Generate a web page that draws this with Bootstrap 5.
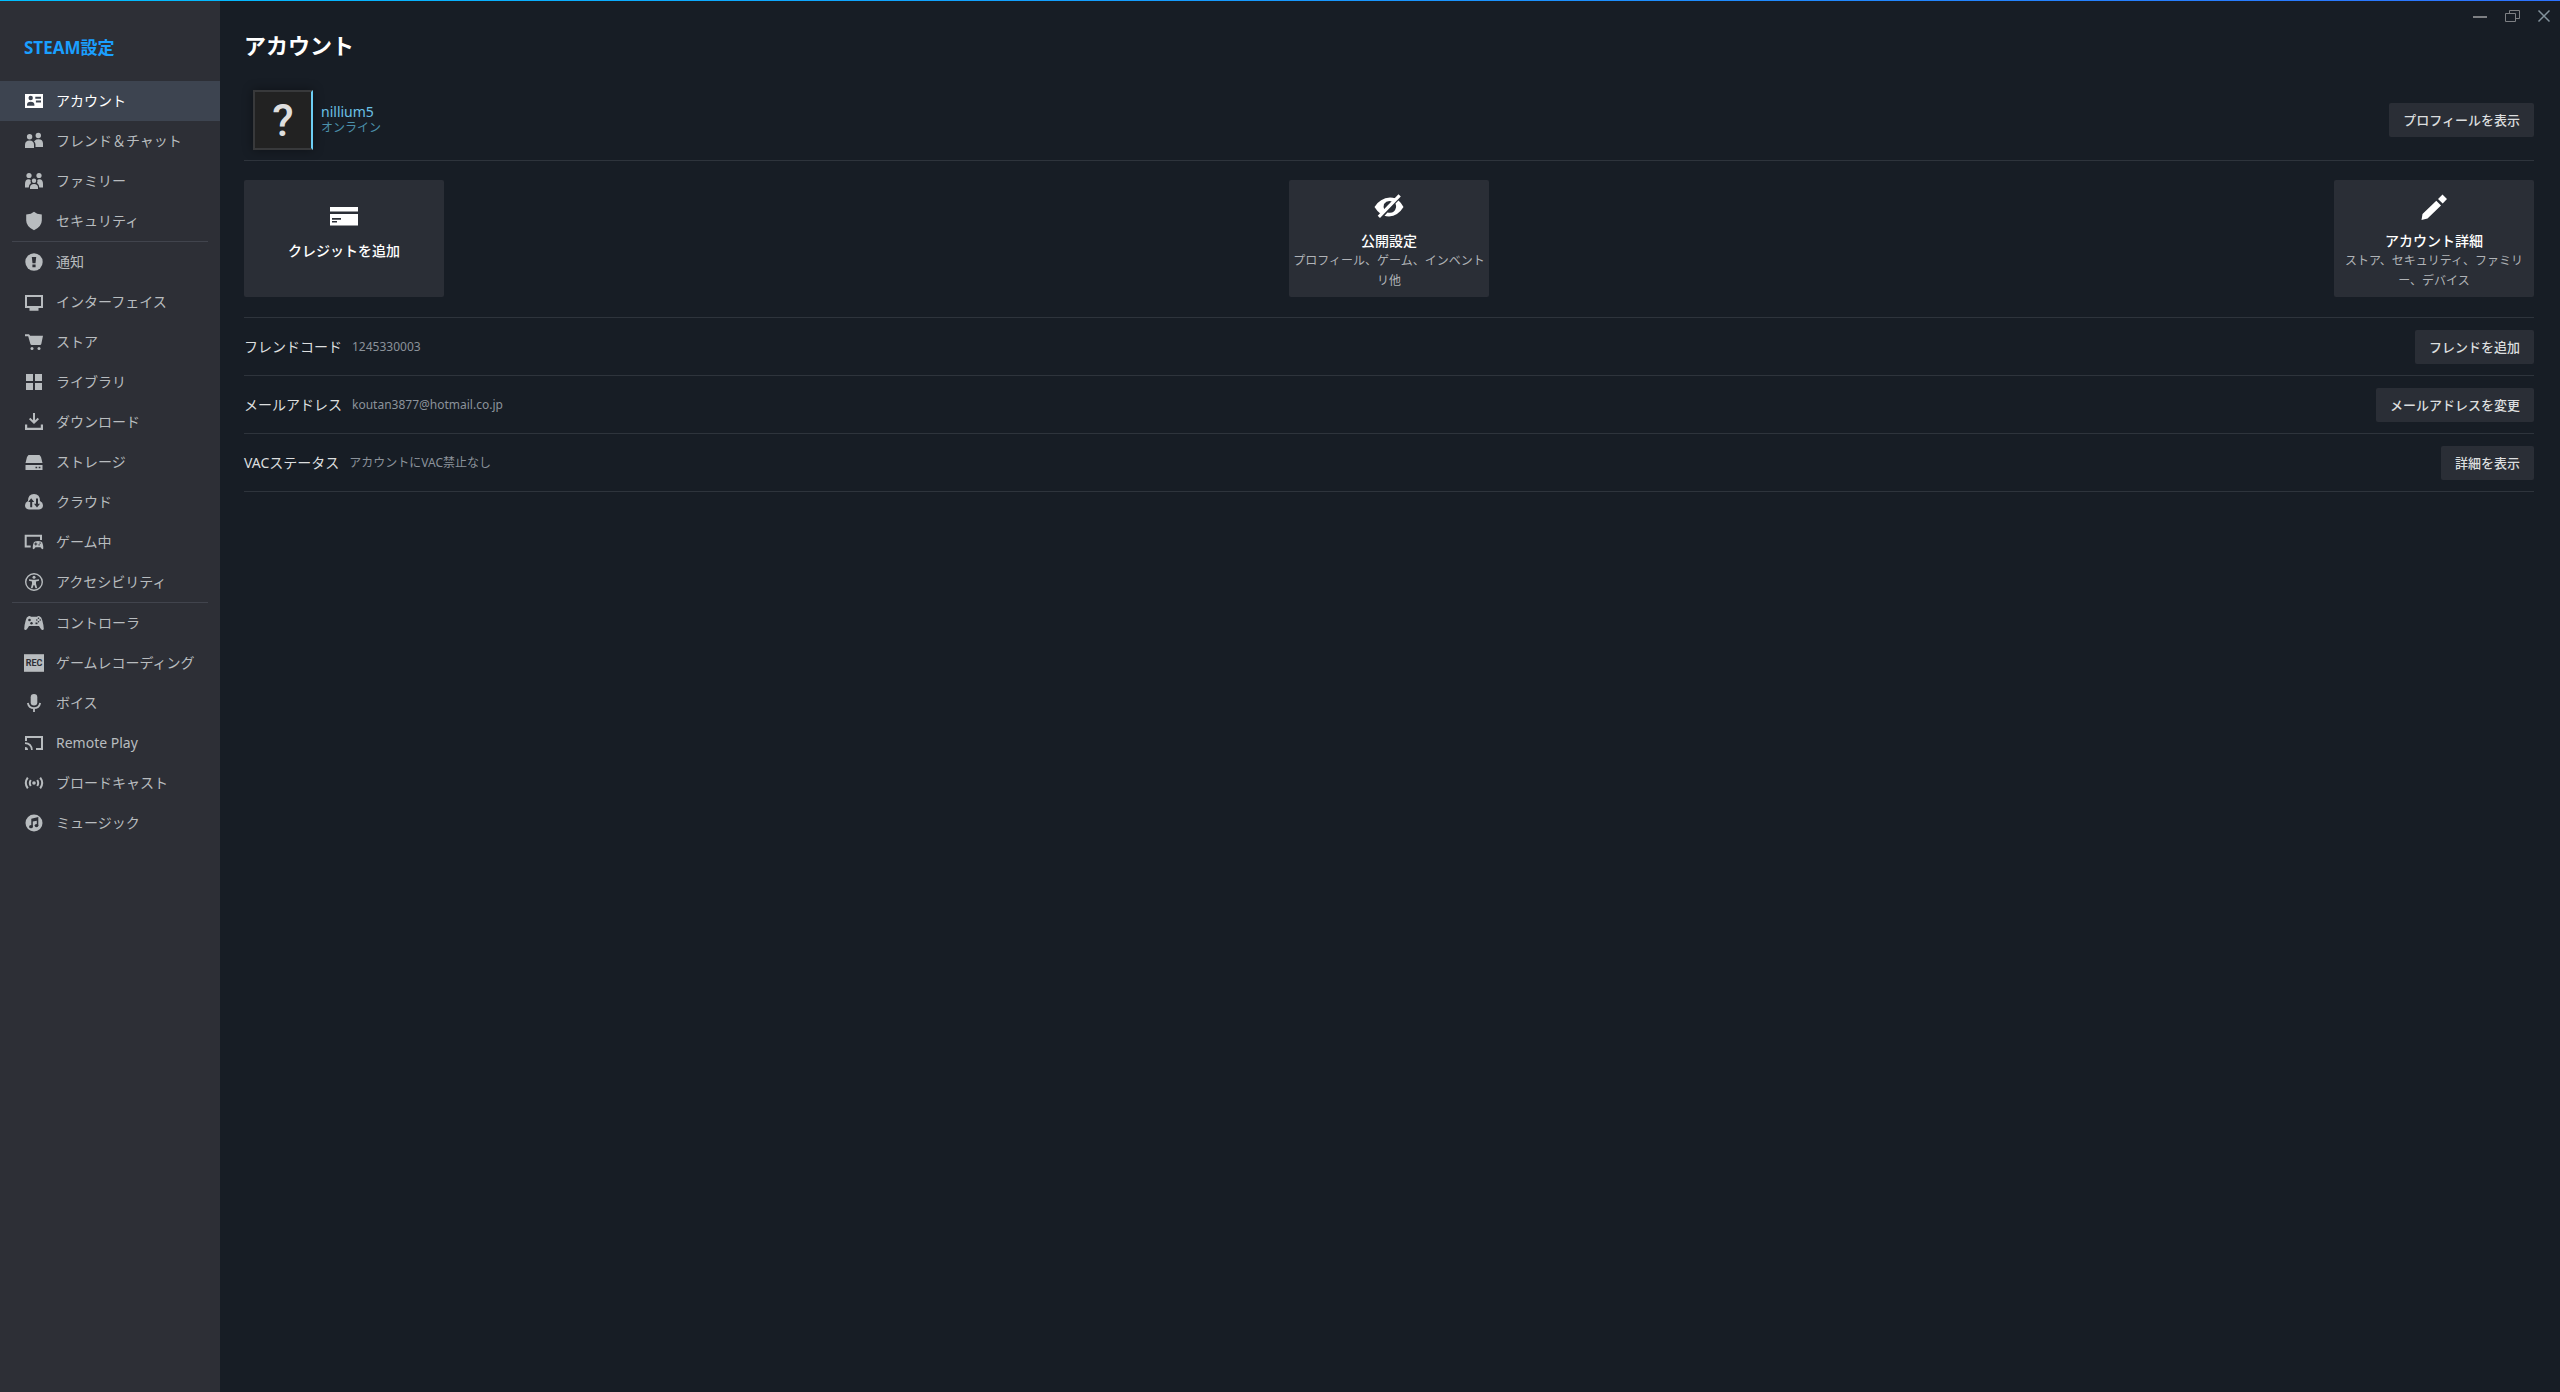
<!DOCTYPE html>
<html lang="ja">
<head>
<meta charset="utf-8">
<meta name="viewport" content="width=device-width, initial-scale=1">
<title>STEAM設定</title>
<link href="https://cdn.jsdelivr.net/npm/bootstrap@5.3.0/dist/css/bootstrap.min.css" rel="stylesheet">
<style>
  body { background: #171d25; color: #dcdedf; font-family: "Noto Sans", "Noto Sans CJK JP", sans-serif; font-size: 14px; line-height: 20px; }
  .accent-line { height: 1px; background: linear-gradient(to right, #00bfff, #2d73ff); }
  .side-menu { width: 220px; background: #2d2f36; }
  .side-heading { color: #1a9fff; font-size: 17px; line-height: 24px; padding: 35px 24px 21px; }
  .side-menu .nav-link { height: 40px; gap: 12px; padding: 0 24px; border-radius: 0; color: #b8bcbf; white-space: nowrap; }
  .side-menu .nav-link:hover { color: #fff; }
  .side-menu .nav-link.active { background: #3d4450; color: #fff; }
  .side-menu svg { width: 20px; height: 20px; flex: none; fill: currentColor; }
  .side-rule { height: 1px; margin: 0 12px; background: #41444d; }
  .cut { fill: #2d2f36; }
  .active .cut { fill: #3d4450; }
  .ln { fill: none; stroke: currentColor; }
  .content-area { padding: 30px 26px 0 24px; }
  .page-title { font-size: 22px; line-height: 28px; color: #fff; }
  .line-row { border-bottom: 1px solid #2e343c; }
  .profile-row { padding: 31px 0 10px 9px; }
  .avatar { width: 60px; height: 60px; background: #222; border: 2px solid #38393b; border-right-color: #6dcff6; color: #dedede; font: 500 44px/58px Roboto, sans-serif; box-shadow: 0 0 10px #0006; }
  .user-name { color: #6bc1e6; line-height: 16px; }
  .user-state { color: #4b90ab; font-size: 12px; line-height: 16px; }
  .act { background: #2a2e36; color: #dcdedf; border: 0; border-radius: 2px; font-size: 13px; line-height: 20px; padding: 7px 14px; font-weight: 500; }
  .act:hover, .tile:hover { background: #3d4450; color: #fff; }
  .tile { width: 200px; height: 117px; background: #2a2e36; border: 0; border-radius: 2px; padding: 4px 4px 0; color: #b0b3b7; font-size: 12px; line-height: 20px; }
  .tile strong { font-size: 14px; font-weight: 500; color: #fff; }
  .tile span { min-height: 20px; }
  .tile svg { width: 32px; height: 32px; fill: #fff; }
  .tiles { padding: 19px 0 20px; }
  .info-row { height: 58px; gap: 10px; }
  .info-value { color: #8b929a; font-size: 12px; }
  .win-controls { top: 6px; right: 6px; gap: 12px; }
  .win-controls button { width: 20px; height: 20px; background: none; }
  .win-controls svg { width: 20px; height: 20px; display: block; fill: none; stroke: #7d7f83; stroke-width: 1; }
</style>
<script src="https://cdn.jsdelivr.net/npm/bootstrap@5.3.0/dist/js/bootstrap.bundle.min.js"></script>
</head>
<body>
<div class="d-flex flex-column min-vh-100">
  <div class="accent-line"></div>
  <div class="d-flex flex-grow-1">
    <aside class="side-menu flex-shrink-0">
      <h2 class="side-heading fw-bold m-0">STEAM設定</h2>
      <nav class="nav nav-pills flex-column flex-nowrap" aria-label="設定">
        <a class="nav-link active d-flex align-items-center" aria-current="page" href="#"><svg viewBox="0 0 20 20"><path d="M1 3h18v14H1z"/><g class="cut"><circle cx="6.7" cy="7" r="2.2"/><path d="M3 14.8v-1q0-3 3.7-3t3.7 3v1zM11.3 5.7H17v2h-5.700zM11.900 9.500H17v2h-5.100z"/></g></svg>アカウント</a>
        <a class="nav-link d-flex align-items-center" href="#"><svg viewBox="0 0 20 20"><circle cx="5.600" cy="5.700" r="2.700"/><path d="M1 17v-3q0-4.500 4.500-4.500T10 14v3z"/><circle cx="14.300" cy="4.500" r="2.700"/><path d="M11 9.500q1-1.300 3.300-1.300Q19 8.200 19 12.500V16h-7.500v-2.500q0-2-1.500-3z"/></svg>フレンド＆チャット</a>
        <a class="nav-link d-flex align-items-center" href="#"><svg viewBox="0 0 20 20"><circle cx="5" cy="4.500" r="2.600"/><circle cx="15" cy="4.500" r="2.600"/><circle cx="10" cy="9.700" r="2.200"/><path d="M6 18v-1.500q0-3.500 4-3.500t4 3.500V18zM1 16.500V13q0-4.500 3.500-4.700 1.800 0 2.200 1Q6.200 11 7 12q-2.300 1.500-2.300 4.500zM19 16.500V13q0-4.500-3.500-4.700-1.800 0-2.200 1 .5 1.700-.3 2.700 2.300 1.500 2.300 4.500z"/></svg>ファミリー</a>
        <a class="nav-link d-flex align-items-center" href="#"><svg viewBox="0 0 20 20"><path d="M10 .7q2.500 2.300 7.800 2.900V9.500Q17.800 15.500 10 19.300 2.200 15.500 2.200 9.500V3.600Q7.500 3 10 .7z"/></svg>セキュリティ</a>
        <div class="side-rule"></div>
        <a class="nav-link d-flex align-items-center" href="#"><svg viewBox="0 0 20 20"><circle cx="10" cy="10" r="8.700"/><path class="cut" d="M7.800 5h4.400l-.7 6.300h-3zM8.400 12.500h3.200v2.800H8.400z"/></svg>通知</a>
        <a class="nav-link d-flex align-items-center" href="#"><svg viewBox="0 0 20 20"><path fill-rule="evenodd" d="M1 3h18v13h-4.500v2.700h-9V16H1zM3 5v9h14V5z"/></svg>インターフェイス</a>
        <a class="nav-link d-flex align-items-center" href="#"><svg viewBox="0 0 20 20"><path d="M1 2.200h4l1.200 1.500H19l-1.700 8.300q-.2 1-1.300 1H7.700q-1 0-1.300-1L4.200 4.200H1z"/><circle cx="8" cy="16.500" r="1.500"/><circle cx="15" cy="16.500" r="1.500"/></svg>ストア</a>
        <a class="nav-link d-flex align-items-center" href="#"><svg viewBox="0 0 20 20"><path d="M2 2h7v7H2zM11 2h7v7h-7zM2 11h7v7H2zM11 11h7v7h-7z"/></svg>ライブラリ</a>
        <a class="nav-link d-flex align-items-center" href="#"><svg viewBox="0 0 20 20"><path d="M9 1h2v7.200L13.700 5.700 15 7.200l-5 4.900-5-4.900 1.300-1.500L9 8.200zM1 12.500h2.200v3.300h13.600v-3.300H19V18H1z"/></svg>ダウンロード</a>
        <a class="nav-link d-flex align-items-center" href="#"><svg viewBox="0 0 20 20"><path d="M4.500 3h11L17 5l1.500 6h-17L3 5zM1.500 13h17v5h-17z"/><path class="cut" d="M11.500 14.700h1.700v1.600h-1.700zM14.700 14.700h1.700v1.600h-1.700z"/></svg>ストレージ</a>
        <a class="nav-link d-flex align-items-center" href="#"><svg viewBox="0 0 20 20"><path d="M5 17.500q-4-.4-4-4.200Q1 10.500 4 9q0-7 6-7t6 7q3 1.500 3 4.300 0 3.800-4 4.200z"/><path class="cut" d="M7.200 6.200 10.200 10H8.200v5.200h-2V10h-2zM13 15.500 10 11.700h2V6.500h2v5.200h2z"/></svg>クラウド</a>
        <a class="nav-link d-flex align-items-center" href="#"><svg viewBox="0 0 20 20"><path d="M.7 2.700H18V8h-2V4.700H2.700v8.800h4v2h-6z"/><path d="M11 9.500q3-.8 6 0 1.500.3 2 3.500.7 4-.3 4.300-1 0-2.200-2h-5q-1.200 2-2.200 2-1-.3-.3-4.300.5-3.200 2-3.500z"/><path class="cut" d="M10.300 11.500h1v-1h1v1h1v1h-1v1h-1v-1h-1zM15.500 10.500h1.200v1.200h-1.200zM14.500 12.300h1.200v1.200h-1.200z"/></svg>ゲーム中</a>
        <a class="nav-link d-flex align-items-center" href="#"><svg viewBox="0 0 20 20"><circle class="ln" cx="10" cy="10" r="8.300" stroke-width="1.400"/><circle cx="10" cy="5.200" r="1.500"/><path d="M5 7.300l3.500.5h3l3.500-.5v1.500l-3 .7v2.200l1.200 4.600h-1.700L10.300 13h-.6l-1.200 3.300H6.800L8 11.700V9.500l-3-.7z"/></svg>アクセシビリティ</a>
        <div class="side-rule"></div>
        <a class="nav-link d-flex align-items-center" href="#"><svg viewBox="0 0 20 20"><path d="M4.500 3.300Q6 2.700 7 3.700h6q1-1 2.500-.4 2 .4 2.700 3.700 1.600 5.500 1.600 9-.3 1.200-1.500 1-1-.1-3.300-4H5q-2.300 3.900-3.300 4-1.200.2-1.500-1 0-3.500 1.600-9 .7-3.300 2.700-3.700z"/><g class="cut"><circle cx="5.500" cy="7" r="1.300"/><circle cx="7.500" cy="10.200" r="1.200"/><path d="M11.500 9.500h2v1.700h-2z"/><circle cx="14.500" cy="5.300" r=".8"/><circle cx="16.200" cy="7" r=".8"/><circle cx="14.500" cy="8.700" r=".8"/><circle cx="12.800" cy="7" r=".8"/></g></svg>コントローラ</a>
        <a class="nav-link d-flex align-items-center" href="#"><svg viewBox="0 0 20 20"><path d="M0 1.200h20v17.600H0z"/><text class="cut" x="10" y="13" text-anchor="middle" font-family="Roboto, sans-serif" font-weight="700" font-size="9">REC</text></svg>ゲームレコーディング</a>
        <a class="nav-link d-flex align-items-center" href="#"><svg viewBox="0 0 20 20"><rect x="6.700" y="1" width="6.600" height="11.500" rx="3.300"/><path class="ln" stroke-width="1.800" d="M3.800 10q1.200 5.200 6.200 5.200t6.200-5.200M10 15v4"/></svg>ボイス</a>
        <a class="nav-link d-flex align-items-center" href="#"><svg viewBox="0 0 20 20"><path d="M1 3h18v14h-7v-2h5V5H3v3H1z"/><path d="M1 14q3 0 3 3H1z"/><path class="ln" stroke-width="1.700" d="M1 10.200q6.500.3 6.900 6.800"/></svg>Remote Play</a>
        <a class="nav-link d-flex align-items-center" href="#"><svg viewBox="0 0 20 20"><circle cx="10" cy="10" r="1.800"/><path class="ln" stroke-width="2" d="M6.800 7q-2 3 0 6M13.200 7q2 3 0 6M3.800 4.700q-4 5.300 0 10.600M16.200 4.700q4 5.300 0 10.600"/></svg>ブロードキャスト</a>
        <a class="nav-link d-flex align-items-center" href="#"><svg viewBox="0 0 20 20"><circle cx="10" cy="10" r="8.500"/><g class="cut"><path d="M7.300 5.700 14.300 4v8.500h-1.500V7.700L8.800 8.600v5.200H7.300z"/><ellipse cx="7" cy="13.700" rx="1.900" ry="1.600"/><ellipse cx="12.500" cy="12.600" rx="1.900" ry="1.600"/></g></svg>ミュージック</a>
      </nav>
    </aside>

    <main class="content-area flex-grow-1 position-relative">
      <div class="win-controls position-absolute d-flex">
        <button class="border-0 p-0" type="button" aria-label="最小化"><svg viewBox="0 0 20 20"><path stroke-width="2" d="M3 10h14"/></svg></button>
        <button class="border-0 p-0" type="button" aria-label="元に戻す"><svg viewBox="0 0 20 20"><path d="M3.500 6.500h10v8h-10zM7.500 6.500v-3h10v8h-4"/></svg></button>
        <button class="border-0 p-0" type="button" aria-label="閉じる"><svg viewBox="0 0 20 20"><path stroke="#82929c" stroke-width="1.500" d="M4.500 3.500l11 11M15.500 3.500l-11 11"/></svg></button>
      </div>
      <h1 class="page-title fw-bold m-0">アカウント</h1>

      <section class="profile-row line-row d-flex align-items-center">
        <div class="avatar text-center">?</div>
        <div class="ms-2">
          <div class="user-name">nillium5</div>
          <div class="user-state">オンライン</div>
        </div>
        <button class="act ms-auto" type="button">プロフィールを表示</button>
      </section>

      <section class="tiles line-row d-flex justify-content-between">
        <button class="tile d-flex flex-column align-items-center justify-content-center" type="button">
          <svg class="mb-2" viewBox="0 0 32 32"><path d="M2 6h28v4.500H2z"/><path fill-rule="evenodd" d="M2 13h28v11.500H2zM4 17v1.800h9V17zm0 3v1.500h5V20z"/></svg>
          <strong>クレジットを追加</strong>
          <span></span>
        </button>
        <button class="tile d-flex flex-column align-items-center justify-content-center" type="button">
          <svg class="mb-2" viewBox="0 0 32 32"><path d="M1.500 16Q7 7 17 6.500q3 0 5.500 1L19.500 10.500Q14 8.500 11 13q-1 3 .3 5.500L7 22.300Q4 20 1.500 16zM15.500 13.500q1.500-1.500 3.500-1l-6 6q0-3.500 2.500-5zM25.500 9.500Q28.500 12 30.500 16 25 25 16 25.500q-3 0-4.500-.8L14.500 21.500q7 1.500 8.500-5 .2-2-.5-4zM25.500 3.200 27.800 5.500 7 27 4.700 24.700z"/></svg>
          <strong>公開設定</strong>
          <span>プロフィール、ゲーム、インベントリ他</span>
        </button>
        <button class="tile d-flex flex-column align-items-center justify-content-center" type="button">
          <svg class="mb-2" viewBox="0 0 32 32"><path d="M24.500 3.500 29 8l-4.300 4.500-4.700-4.500zM18.300 9.700 23 14.400 9.500 27.500 3.500 29l1-6z"/></svg>
          <strong>アカウント詳細</strong>
          <span>ストア、セキュリティ、ファミリー、デバイス</span>
        </button>
      </section>

      <section class="info-row line-row d-flex align-items-center">
        <span>フレンドコード</span><span class="info-value">1245330003</span>
        <button class="act ms-auto" type="button">フレンドを追加</button>
      </section>
      <section class="info-row line-row d-flex align-items-center">
        <span>メールアドレス</span><span class="info-value">koutan3877@hotmail.co.jp</span>
        <button class="act ms-auto" type="button">メールアドレスを変更</button>
      </section>
      <section class="info-row line-row d-flex align-items-center">
        <span>VACステータス</span><span class="info-value">アカウントにVAC禁止なし</span>
        <button class="act ms-auto" type="button">詳細を表示</button>
      </section>
    </main>
  </div>
</div>
</body>
</html>
